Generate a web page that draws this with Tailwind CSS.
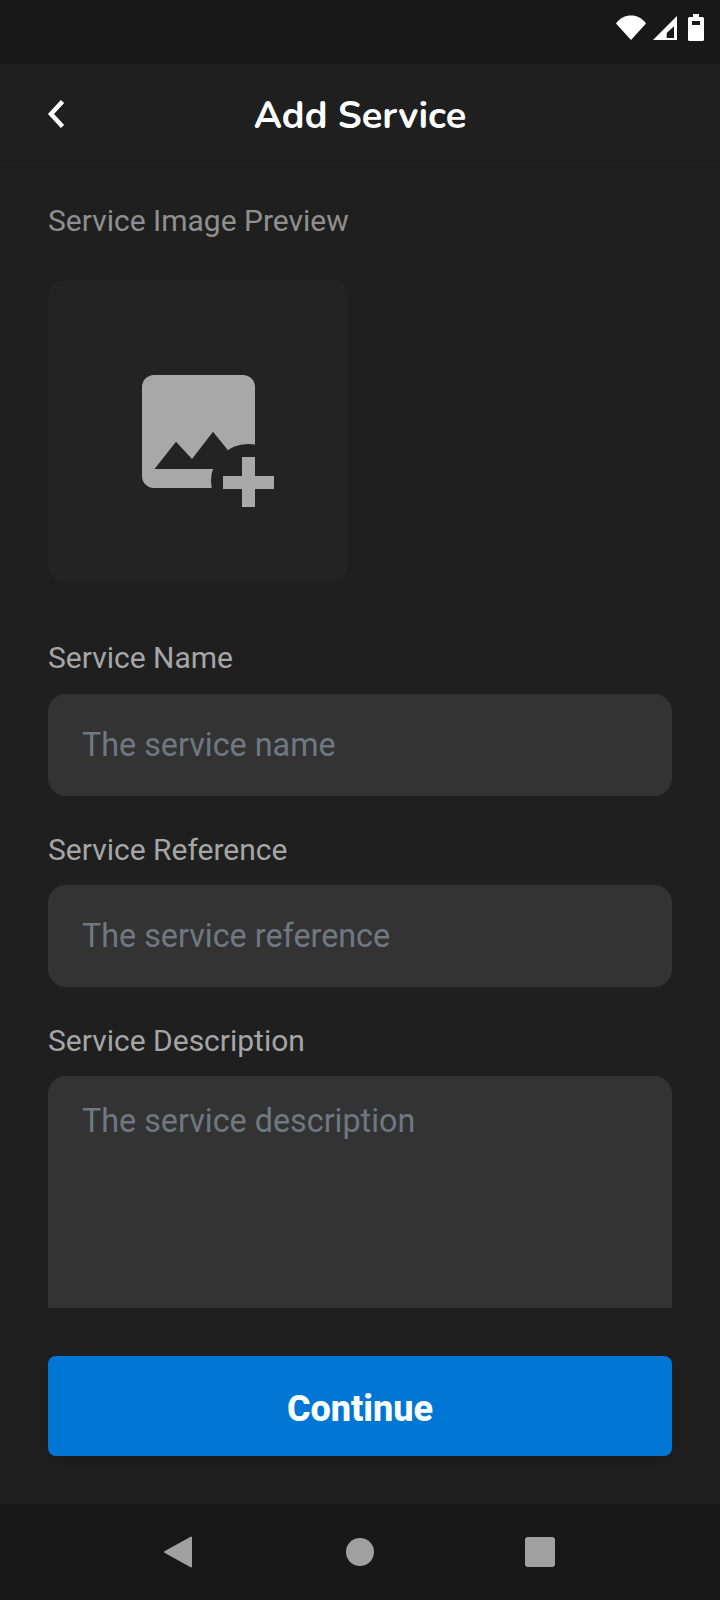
<!DOCTYPE html>
<html lang="en">
<head>
    <meta charset="UTF-8">
    <meta name="viewport" content="width=device-width, initial-scale=1.0">
    <title>Add Service</title>
    <script src="https://cdn.jsdelivr.net/npm/@tailwindcss/browser@4"></script>
</head>
<body class="bg-[#1f1f1f] font-['Roboto',sans-serif]">
    <div class="w-[720px] h-[1600px] flex flex-col overflow-hidden">
        <!-- Status bar -->
        <div class="h-[64px] shrink-0 bg-[#181818] flex items-start justify-end gap-[6px] pt-[14px] pr-[16px]">
            <svg width="30" height="27" viewBox="0 0 30 27"><path d="M0 9.500C4 4 9 1.500 15 1.500S26 4 30 9.500L15 26z" fill="#fff"/></svg>
            <svg width="26" height="27" viewBox="0 0 26 27"><path fill-rule="evenodd" d="M25 2v24H1zM22 12.300l-7.300 6.700V24H22z" fill="#fff"/></svg>
            <svg class="ml-[4px]" width="16" height="27" viewBox="0 0 16 27"><path fill-rule="evenodd" d="M5 0h6v3h3.500q1.500 0 1.500 1.500V25.500q0 1.500-1.500 1.500h-13Q0 27 0 25.500V4.500Q0 3 1.500 3H5zM4 7v4h8V7z" fill="#fff"/></svg>
        </div>

        <!-- Header -->
        <div class="h-[101px] shrink-0 relative flex items-center justify-center border-b border-[#232323]">
            <svg class="absolute left-[45px] top-[34px]" width="22" height="32" viewBox="0 0 22 32"><path d="M17.500 3.500L6 16l11.500 12.500" fill="none" stroke="#fff" stroke-width="4.500"/></svg>
            <h1 class="font-['Nunito','Open_Sans',sans-serif] text-[38px] font-bold text-white mt-[3px]">Add Service</h1>
        </div>

        <!-- Form -->
        <div class="flex-1 min-h-0 overflow-hidden px-[48px] pt-[36px]">
            <p class="text-[30px] leading-[40px] text-[#8f8f8f]">Service Image Preview</p>
            <div class="mt-[39px] w-[300px] h-[302px] rounded-[16px] bg-[#232323] flex items-center justify-center pl-[19px] pt-[20px]">
                <svg width="132" height="132" viewBox="0 0 132 132">
                    <path d="M12 0h89a12 12 0 0 1 12 12v89a12 12 0 0 1-12 12H12A12 12 0 0 1 0 101V12A12 12 0 0 1 12 0z" fill="#a8a8a8"/>
                    <path d="M12.500 94L34 66.700 50 84 71 56.700 85 74 90 94z" fill="#232323"/>
                    <circle cx="106" cy="106" r="37" fill="#232323"/>
                    <path d="M100 82h13v19h19v13h-19v19h-13v-19H81v-13h19z" fill="#a8a8a8"/>
                </svg>
            </div>

            <label class="block mt-[56px] text-[30px] leading-[40px] text-[#a6a6a6]">Service Name</label>
            <input class="mt-[16px] block w-full h-[102px] rounded-[18px] bg-[#333333] px-[34px] text-[32.300px] text-white placeholder:text-[#6f7880] outline-none" placeholder="The service name">

            <label class="block mt-[34px] text-[30px] leading-[40px] text-[#a6a6a6]">Service Reference</label>
            <input class="mt-[15px] block w-full h-[102px] rounded-[18px] bg-[#333333] px-[34px] text-[32.300px] text-white placeholder:text-[#6f7880] outline-none" placeholder="The service reference">

            <label class="block mt-[34px] text-[30px] leading-[40px] text-[#a6a6a6]">Service Description</label>
            <textarea class="mt-[15px] block w-full h-[300px] resize-none rounded-[18px] bg-[#333333] px-[34px] py-[25px] text-[32.300px] leading-[40px] text-white placeholder:text-[#6f7880] outline-none" placeholder="The service description"></textarea>
        </div>

        <!-- Continue button -->
        <div class="h-[196px] shrink-0 px-[48px] pt-[48px]">
            <button class="w-full h-[100px] pt-[5px] rounded-[8px] bg-[#0077d4] text-[36px] font-extrabold text-white shadow-lg">Continue</button>
        </div>

        <!-- Nav bar -->
        <div class="h-[96px] shrink-0 bg-[#181818] relative">
            <svg class="absolute left-[163px] top-[32px]" width="30" height="32" viewBox="0 0 30 32"><path d="M28 1.500v29L2 16z" fill="#a0a0a0" stroke="#a0a0a0" stroke-width="2" stroke-linejoin="round"/></svg>
            <div class="absolute left-[346px] top-[34px] w-[28px] h-[28px] rounded-full bg-[#a0a0a0]"></div>
            <div class="absolute left-[525px] top-[33px] w-[30px] h-[30px] rounded-[3px] bg-[#a0a0a0]"></div>
        </div>
    </div>
</body>
</html>
